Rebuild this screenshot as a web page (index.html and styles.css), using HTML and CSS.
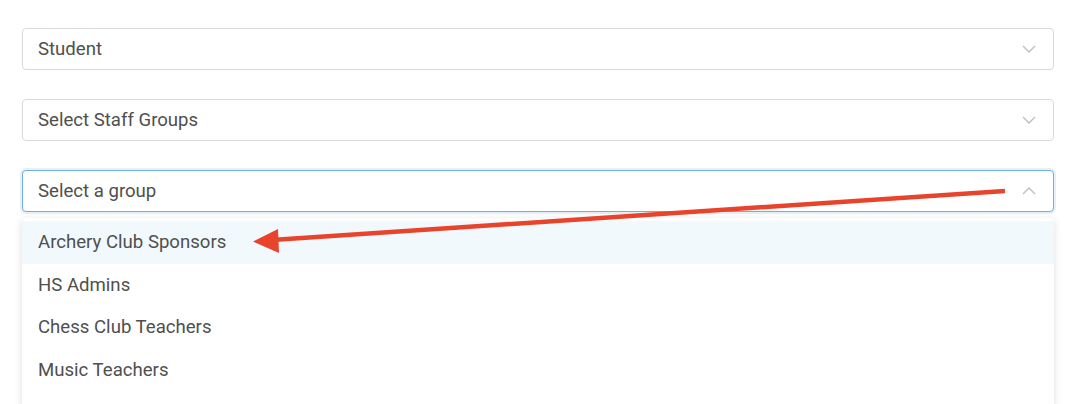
FILE: index.html
```html
<!DOCTYPE html>
<html>
<head>
<meta charset="utf-8">
<link rel="stylesheet" href="styles.css">
</head>
<body>
<div class="page">
  <div class="select">
    <span class="value">Student</span>
    <svg class="chev" width="14" height="8" viewBox="0 0 14 8"><path d="M1 1 L7 7 L13 1" fill="none" stroke="#bdbdbd" stroke-width="1.3"/></svg>
  </div>
  <div class="select">
    <span class="value">Select Staff Groups</span>
    <svg class="chev" width="14" height="8" viewBox="0 0 14 8"><path d="M1 1 L7 7 L13 1" fill="none" stroke="#bdbdbd" stroke-width="1.3"/></svg>
  </div>
  <div class="field">
    <div class="select focused">
      <span class="value">Select a group</span>
      <svg class="chev" width="14" height="8" viewBox="0 0 14 8"><path d="M1 7 L7 1 L13 7" fill="none" stroke="#bdbdbd" stroke-width="1.3"/></svg>
    </div>
    <ul class="menu">
      <li class="item active">Archery Club Sponsors</li>
      <li class="item">HS Admins</li>
      <li class="item">Chess Club Teachers</li>
      <li class="item">Music Teachers</li>
    </ul>
  </div>
</div>
<svg class="annot" width="1074" height="404" viewBox="0 0 1074 404">
  <line x1="1005" y1="191" x2="272" y2="240" stroke="#e8432b" stroke-width="4.5" stroke-linecap="butt"/>
  <polygon points="253,241.5 278,229 279,253" fill="#e8432b"/>
</svg>
</body>
</html>
```
FILE: styles.css
```css
html, body {
  margin: 0;
  padding: 0;
  background: #ffffff;
  overflow: hidden;
  height: 404px;
}
.page {
  padding: 28px 20px 0 22px;
  display: flex;
  flex-direction: column;
  gap: 29px;
  font-family: Roboto, "Liberation Sans", sans-serif;
  font-size: 18.6px;
  color: #4f4f4f;
}
.select {
  box-sizing: border-box;
  height: 42px;
  border: 1px solid #d9d9d9;
  border-radius: 4px;
  display: flex;
  align-items: center;
  justify-content: space-between;
  padding: 0 17px 0 15px;
  background: #fff;
}
.select.focused {
  border-color: #6fb0dc;
  box-shadow: 0 0 0 2px rgba(111, 176, 220, 0.18);
}
.value {
  line-height: 20px;
}
.chev {
  display: block;
}
.field {
  display: flex;
  flex-direction: column;
  gap: 6px;
}
.menu {
  list-style: none;
  margin: 0;
  padding: 3px 0 20px;
  background: #fff;
  border-radius: 4px;
  box-shadow: 0 2px 9px rgba(0, 0, 0, 0.13);
}
.item {
  height: 42.5px;
  display: flex;
  align-items: center;
  padding: 0 16px;
}
.item.active {
  background: #f1f9fd;
}
.annot {
  position: absolute;
  left: 0;
  top: 0;
  pointer-events: none;
}
```
